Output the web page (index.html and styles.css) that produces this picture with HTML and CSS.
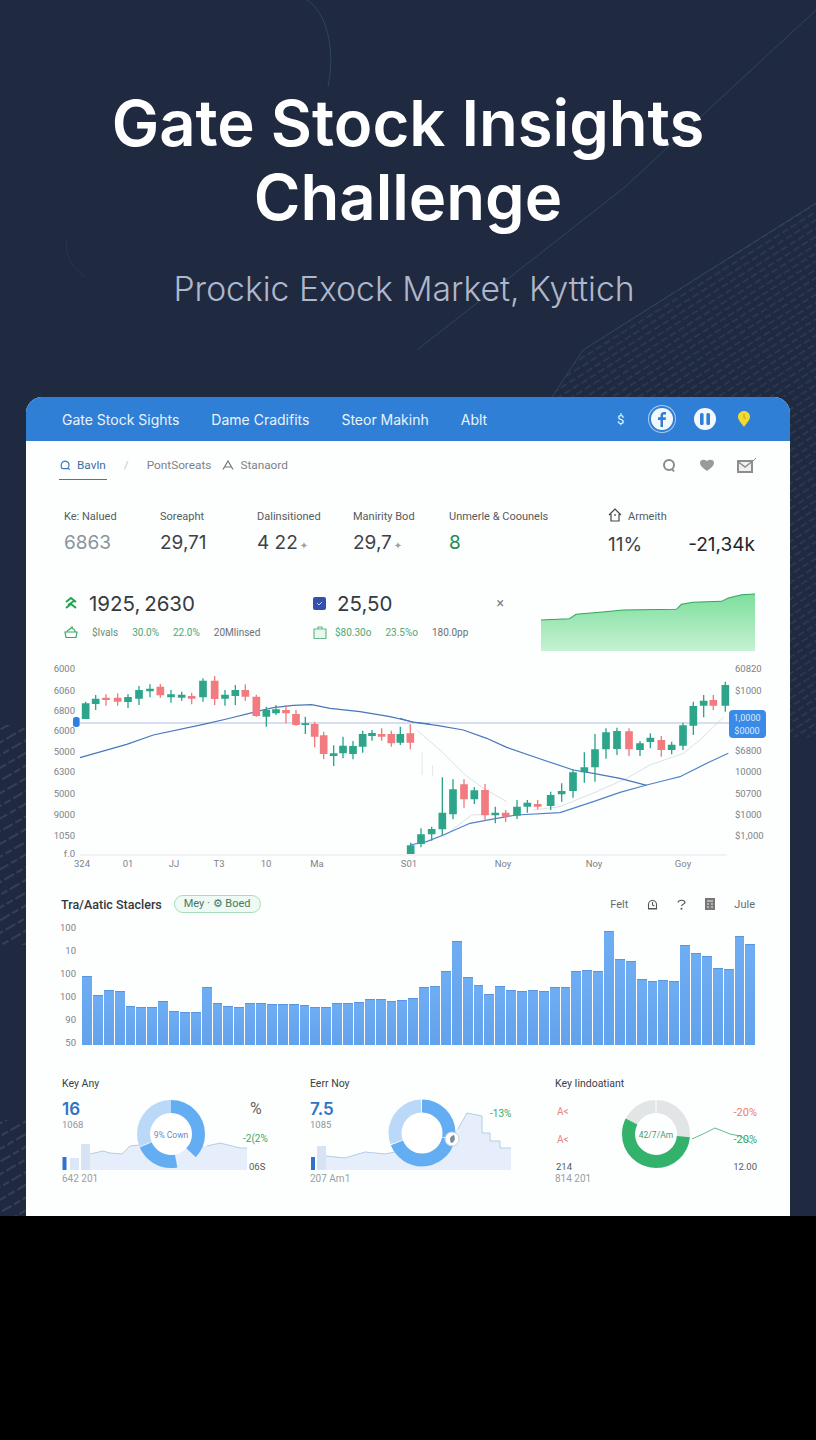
FILE: index.html
```html
<!DOCTYPE html>
<html lang="en">
<head>
    <meta charset="UTF-8">
    <meta name="viewport" content="width=device-width, initial-scale=1.0">
    <title>Gate Stock Insights Challenge</title>
    <link rel="stylesheet" href="styles.css">
</head>
<body>
    <div class="screen">
        <svg class="decor" width="816" height="1224" viewBox="0 0 816 1224">
            <defs>
                <pattern id="hatch-right" width="20" height="7" patternUnits="userSpaceOnUse" patternTransform="rotate(-32)">
                    <line x1="0" y1="3" x2="20" y2="3" class="hatch-line"/>
                </pattern>
                <pattern id="hatch-left" width="24" height="11" patternUnits="userSpaceOnUse" patternTransform="rotate(-30)">
                    <line x1="0" y1="5" x2="24" y2="5" class="hatch-line bright"/>
                </pattern>
            </defs>
            <rect x="0" y="1216" width="26" height="8" class="edge"/>
            <path class="arc" d="M307 0C326 12 336 48 328 87"/>
            <path class="arc faint" d="M67 240C64 255 72 268 86 277"/>
            <path class="arc" d="M816 10L625 187L417 350"/>
            <path class="arc" d="M816 203L583 350L552 397"/>
            <polygon points="816,203 583,350 552,397 816,397" class="hatch-zone-right"/>
            <rect x="790" y="397" width="26" height="340" class="hatch-zone-right"/>
            <rect x="0" y="725" width="26" height="220" class="hatch-zone-left"/>
            <rect x="0" y="1120" width="26" height="96" class="hatch-zone-left"/>
        </svg>

        <h1 class="title">Gate Stock Insights<br>Challenge</h1>
        <p class="subtitle">Prockic Exock Market, Kyttich</p>

        <div class="card">
            <div class="topbar">
                <a class="nav-link">Gate Stock Sights</a>
                <a class="nav-link">Dame Cradifits</a>
                <a class="nav-link">Steor Makinh</a>
                <a class="nav-link">Ablt</a>
                <div class="topbar-right">
                    <span class="dollar">$</span>
                    <span class="round-btn ringed">
                        <svg width="12" height="16" viewBox="0 0 12 16"><path d="M7 16V9h2.6l.4-2.7H7V4.800c0-.8.3-1.300 1.400-1.300H10V1.100C9.600 1 8.800 1 8 1 5.900 1 4.500 2.200 4.500 4.500v1.800H2V9h2.500v7z" fill="#2f7fd6"/></svg>
                    </span>
                    <span class="round-btn">
                        <svg width="12" height="14" viewBox="0 0 12 14"><rect x="1" y="1" width="3.600" height="12" rx="1.500" fill="#2f7fd6"/><rect x="7.400" y="1" width="3.600" height="12" rx="1.500" fill="#2f7fd6"/></svg>
                    </span>
                    <svg class="pin" width="14" height="18" viewBox="0 0 14 18"><path d="M7 17C4.500 13 1 10.500 1 6.800 1 3.500 3.700 1 7 1s6 2.500 6 5.800C13 10.500 9.500 13 7 17z" fill="#f3d930"/><path d="M7 4v3.500c0 1 1.500 1 2 .3" fill="none" stroke="#b79f1c"/></svg>
                </div>
            </div>

            <div class="tabs">
                <div class="tab active">
                    <svg width="11" height="11" viewBox="0 0 11 11"><path d="M2 8.500C.6 6.800 1 3 3 1.800c2-1.200 5-.6 5.800 1.700.5 1.700.2 3.700-1 5-1.500.2-4 .2-5.800 0zM8 8.500l2 1" class="tab-icon"/></svg>
                    Bavln
                </div>
                <span class="tab-sep">/</span>
                <div class="tab">PontSoreats</div>
                <div class="tab">
                    <svg width="12" height="10" viewBox="0 0 12 10"><path d="M1 9.500L6 1l5 8.500M3 7h6" class="tab-icon grey"/></svg>
                    Stanaord
                </div>
                <div class="tabs-right">
                    <svg width="15" height="15" viewBox="0 0 15 15"><circle cx="7" cy="7" r="5" fill="none" stroke="#8a8a8a" stroke-width="2"/><path d="M10 11l2 2.500" stroke="#8a8a8a" stroke-width="2"/></svg>
                    <svg width="14" height="12" viewBox="0 0 14 12"><path d="M7 12C4 9.500 0 7.500 0 3.800 0 1 3.500-.5 7 2c3.500-2.500 7-1 7 1.800C14 7.500 10 9.500 7 12z" fill="#9a9a9a"/></svg>
                    <svg width="20" height="16" viewBox="0 0 20 16"><rect x="1" y="4" width="14" height="11" fill="#f0f0f0" stroke="#8d8d8d" stroke-width="2"/><path d="M1.500 5L8 10l6.500-5" fill="none" stroke="#8d8d8d" stroke-width="1.500"/><path d="M16 4l3-3" stroke="#8d8d8d"/></svg>
                </div>
            </div>

            <div class="kpis">
                <div class="kpi"><div class="kpi-label">Ke: Nalued</div><div class="kpi-value muted">6863</div></div>
                <div class="kpi"><div class="kpi-label">Soreapht</div><div class="kpi-value">29,71</div></div>
                <div class="kpi"><div class="kpi-label">Dalinsitioned</div><div class="kpi-value">4 22<span class="kpi-mark">✦</span></div></div>
                <div class="kpi"><div class="kpi-label">Manirity Bod</div><div class="kpi-value">29,7<span class="kpi-mark">✦</span></div></div>
                <div class="kpi"><div class="kpi-label">Unmerle &amp; Coounels</div><div class="kpi-value green">8</div></div>
                <div class="kpi">
                    <div class="kpi-label">
                        <svg class="house" width="14" height="14" viewBox="0 0 14 14"><path d="M1 7l6-6 6 6M3 6v7h8V6M7 6v2" fill="none" stroke="#444" stroke-width="1.200"/></svg>
                        Armeith
                    </div>
                    <div class="kpi-split"><span class="kpi-value">11%</span><span class="kpi-value dark">-21,34k</span></div>
                </div>
            </div>

            <div class="quotes">
                <div class="quote">
                    <div class="quote-main">
                        <svg width="14" height="14" viewBox="0 0 14 14"><path d="M2 6l5-4 5 4M2 12l5-4 5 4M4 9l6-4" fill="none" stroke="#22a352" stroke-width="2"/></svg>
                        <span class="quote-value">1925, 2630</span>
                    </div>
                    <div class="quote-sub">
                        <svg width="14" height="13" viewBox="0 0 14 13"><path d="M1 6h12l-1 5.500H2zM3 6c0-2 2-2 3-3l2-2 1 2c1 0 2 1 2 3" fill="none" stroke="#3aa860" stroke-width="1.200"/></svg>
                        <span class="sub-name">$Ivals</span>
                        <span class="sub-green">30.0%</span>
                        <span class="sub-green">22.0%</span>
                        <span class="sub-grey">20Mlinsed</span>
                    </div>
                </div>
                <div class="quote second">
                    <div class="quote-main">
                        <span class="square"><svg width="7" height="5" viewBox="0 0 7 5"><path d="M1 2l2 2 3-3" fill="none" stroke="#c6d2f2" stroke-width="1"/></svg></span>
                        <span class="quote-value">25,50</span>
                        <span class="close">×</span>
                    </div>
                    <div class="quote-sub">
                        <svg width="14" height="13" viewBox="0 0 14 13"><path d="M1 3h12v9.500H1zM5 3V1h4v2" fill="#eaf7ef" stroke="#68b98a" stroke-width="1.200"/></svg>
                        <span class="sub-green">$80.30o</span>
                        <span class="sub-green">23.5%o</span>
                        <span class="sub-grey">180.0pp</span>
                    </div>
                </div>
                <svg class="spark" width="214" height="59" viewBox="375 600 640 177" preserveAspectRatio="none">
                    <defs>
                        <linearGradient id="spark-fill" x1="0" y1="0" x2="0" y2="1">
                            <stop offset="0" stop-color="#7ddf9d"/>
                            <stop offset="1" stop-color="#c6f1d3"/>
                        </linearGradient>
                    </defs>
                    <path d="M375 684L460 680L480 667L560 660L620 654L780 652L795 637L830 631L915 628L935 618L975 608L1015 606V777H375Z" fill="url(#spark-fill)"/>
                    <path d="M375 684L460 680L480 667L560 660L620 654L780 652L795 637L830 631L915 628L935 618L975 608L1015 606" fill="none" stroke="#35a55c" stroke-width="3"/>
                </svg>
            </div>

            <svg class="price-chart" width="764" height="220" viewBox="26 660 764 220">
                <line x1="80" y1="855" x2="727" y2="855" class="axis"/>
                <line x1="80" y1="723" x2="730" y2="723" class="level"/>

                <text class="tick" x="75" y="672" text-anchor="end">6000</text>
                <text class="tick" x="75" y="694" text-anchor="end">6060</text>
                <text class="tick" x="75" y="714" text-anchor="end">6800</text>
                <text class="tick" x="75" y="734" text-anchor="end">6000</text>
                <text class="tick" x="75" y="755" text-anchor="end">5000</text>
                <text class="tick" x="75" y="775" text-anchor="end">6300</text>
                <text class="tick" x="75" y="797" text-anchor="end">5000</text>
                <text class="tick" x="75" y="818" text-anchor="end">9000</text>
                <text class="tick" x="75" y="839" text-anchor="end">1050</text>
                <text class="tick" x="75" y="857" text-anchor="end">f.0</text>

                <text class="tick" x="735" y="672">60820</text>
                <text class="tick" x="735" y="694">$1000</text>
                <text class="tick" x="735" y="754">$6800</text>
                <text class="tick" x="735" y="775">10000</text>
                <text class="tick" x="735" y="797">50700</text>
                <text class="tick" x="735" y="818">$1000</text>
                <text class="tick" x="735" y="839">$1,000</text>

                <text class="tick" x="82" y="867" text-anchor="middle">324</text>
                <text class="tick" x="128" y="867" text-anchor="middle">01</text>
                <text class="tick" x="174" y="867" text-anchor="middle">JJ</text>
                <text class="tick" x="219" y="867" text-anchor="middle">T3</text>
                <text class="tick" x="266" y="867" text-anchor="middle">10</text>
                <text class="tick" x="317" y="867" text-anchor="middle">Ma</text>
                <text class="tick" x="409" y="867" text-anchor="middle">S01</text>
                <text class="tick" x="503" y="867" text-anchor="middle">Noy</text>
                <text class="tick" x="594" y="867" text-anchor="middle">Noy</text>
                <text class="tick" x="683" y="867" text-anchor="middle">Goy</text>

                <!-- left half, drawn at 3x so the numbers stay whole -->
                <g transform="translate(40 660) scale(.33333)">
                    <path class="ma dark" d="M120 293L260 253L340 225L490 193L560 177L640 157L700 143L760 136L815 134L870 145L960 155L1050 170L1120 186L1170 192"/>
                    <path class="wick up" d="M137 125V177M167 105V150M264 103V144M297 78V135M330 73V112M393 90V128M425 95V122M489 55V125M555 90V137M586 75V135M679 140V200M708 135V165M796 170V222M881 256V318M909 230V295M939 243V298M968 212V278M996 210V242M1081 200V255"/>
                    <path class="body up" d="M137 130V177M167 116V132M264 111V126M297 90V116M330 86V94M393 103V112M425 104V113M489 62V112M555 104V116M586 90V108M679 150V170M708 148V160M796 190V195M881 280V288M909 257V280M939 258V282M968 222V260M996 219V228M1081 222V248"/>
                    <path class="wick down" d="M198 103V137M233 100V137M361 72V113M455 98V133M524 48V135M616 73V122M649 104V170M738 135V190M768 150V197M824 185V262M851 215V297M1025 205V242M1054 212V260M1111 193V268"/>
                    <path class="body down" d="M198 113V120M233 113V125M361 80V106M455 108V116M524 62V117M616 90V110M649 110V168M738 150V160M768 162V195M824 192V230M851 226V282M1025 222V230M1054 222V250M1111 220V248"/>
                    <rect x="99" y="171" width="20" height="30" rx="8" class="marker"/>
                </g>

                <!-- right half -->
                <g transform="translate(400 660) scale(.33333)">
                    <path class="ghost" d="M66 275V345M98 315V350"/>
                    <path class="ma thin" d="M50 210L120 270L190 340L250 385L320 425M130 530L215 465L280 462M400 450L480 440L590 395L680 355L750 315L850 280L900 240L970 172"/>
                    <path class="ma dark" d="M0 175L35 186L115 197L190 210L260 235L320 262L430 300L520 330L580 340L660 355L740 376"/>
                    <path class="ma" d="M30 555L80 545L130 525L210 490L290 475L350 465L480 458L580 425L660 397L740 375L800 360L840 350L930 305L985 280"/>
                    <path class="wick up" d="M32 548V582M63 505V562M95 500V542M127 352V525M159 358V478M223 382V432M286 440V490M351 420V477M382 420V458M452 395V450M485 370V425M519 328V413M553 277V368M585 222V365M618 205V296M651 203V285M720 243V288M751 220V265M815 245V283M849 188V270M880 125V225M911 105V172M976 65V155"/>
                    <path class="body up" d="M32 556V582M63 523V552M95 507V523M127 458V508M159 388V463M223 391V418M286 458V466M351 440V467M382 428V440M452 405V438M485 393V403M519 337V393M553 322V337M585 268V322M618 217V268M651 213V267M720 250V270M751 233V246M815 254V270M849 196V257M880 138V197M911 122V137M976 75V137"/>
                    <path class="wick down" d="M192 358V443M255 372V482M317 450V486M413 420V448M687 205V288M784 228V290M940 105V150"/>
                    <path class="body down" d="M192 373V418M255 390V466M317 458V470M413 432V440M687 214V268M784 240V270M940 120V137"/>
                </g>

                <rect x="729" y="710" width="37" height="28" rx="4" class="price-tag"/>
                <text class="tag-text" x="747" y="721" text-anchor="middle">1,0000</text>
                <text class="tag-text" x="747" y="734" text-anchor="middle">$0000</text>
            </svg>

            <div class="volume-head">
                <div class="volume-title">
                    <span class="volume-name">Tra/Aatic Staclers</span>
                    <span class="pill">Mey · ⚙ Boed</span>
                </div>
                <div class="volume-tools">
                    <span>Felt</span>
                    <svg width="11" height="11" viewBox="0 0 11 11"><path d="M1 9.500h9M1.500 5.500a4 4 0 1 1 8 0V10h-8zM5.500 3v3l2 1" fill="none" stroke="#555" stroke-width="1.100"/></svg>
                    <svg width="9" height="11" viewBox="0 0 9 11"><path d="M1 3.500C1.500.5 7.500.5 8 3.500 8 5 5 5 4.500 7" fill="none" stroke="#555" stroke-width="1.200"/><circle cx="4.500" cy="9.800" r="1" fill="#555"/></svg>
                    <svg width="10" height="12" viewBox="0 0 10 12"><rect width="10" height="12" fill="#777"/><path d="M2 3h6M2 6h2M6 6h2M2 9h2M6 9h2" stroke="#eee"/></svg>
                    <span>Jule</span>
                </div>
            </div>

            <div class="volume">
                <div class="volume-axis">
                    <span>100</span><span>10</span><span>100</span><span>100</span><span>90</span><span>50</span>
                </div>
                <div class="bars">
                    <div class="bar" style="height:69px"></div><div class="bar" style="height:50px"></div><div class="bar" style="height:55px"></div><div class="bar" style="height:54px"></div><div class="bar" style="height:39px"></div><div class="bar" style="height:38px"></div><div class="bar" style="height:38px"></div><div class="bar" style="height:44px"></div><div class="bar" style="height:34px"></div><div class="bar" style="height:33px"></div><div class="bar" style="height:33px"></div><div class="bar" style="height:58px"></div><div class="bar" style="height:42px"></div><div class="bar" style="height:39px"></div><div class="bar" style="height:38px"></div><div class="bar" style="height:42px"></div><div class="bar" style="height:42px"></div><div class="bar" style="height:41px"></div><div class="bar" style="height:41px"></div><div class="bar" style="height:41px"></div><div class="bar" style="height:40px"></div><div class="bar" style="height:38px"></div><div class="bar" style="height:38px"></div><div class="bar" style="height:42px"></div><div class="bar" style="height:42px"></div><div class="bar" style="height:43px"></div><div class="bar" style="height:46px"></div><div class="bar" style="height:46px"></div><div class="bar" style="height:44px"></div><div class="bar" style="height:45px"></div><div class="bar" style="height:47px"></div>
                    <div class="bar" style="height:58px"></div><div class="bar" style="height:59px"></div><div class="bar" style="height:74px"></div><div class="bar" style="height:104px"></div><div class="bar" style="height:68px"></div><div class="bar" style="height:60px"></div><div class="bar" style="height:51px"></div><div class="bar" style="height:59px"></div><div class="bar" style="height:55px"></div><div class="bar" style="height:54px"></div><div class="bar" style="height:55px"></div><div class="bar" style="height:54px"></div><div class="bar" style="height:58px"></div><div class="bar" style="height:58px"></div><div class="bar" style="height:74px"></div><div class="bar" style="height:75px"></div><div class="bar" style="height:74px"></div><div class="bar" style="height:114px"></div><div class="bar" style="height:86px"></div><div class="bar" style="height:84px"></div><div class="bar" style="height:66px"></div><div class="bar" style="height:64px"></div><div class="bar" style="height:65px"></div><div class="bar" style="height:64px"></div><div class="bar" style="height:100px"></div><div class="bar" style="height:92px"></div><div class="bar" style="height:89px"></div><div class="bar" style="height:77px"></div><div class="bar" style="height:76px"></div><div class="bar" style="height:109px"></div><div class="bar" style="height:101px"></div>
                </div>
            </div>

            <div class="panels">
                <div class="panel">
                    <div class="panel-title">Key Any</div>
                    <svg width="210" height="80" viewBox="62 1091 210 80">
                        <rect x="62.500" y="1156" width="4" height="13" fill="#2f72d0"/>
                        <rect x="70" y="1157" width="9" height="12" fill="#dbe8f8"/>
                        <rect x="81" y="1143" width="9" height="26" fill="#d5e3f5"/>
                        <path class="mini-area" d="M90 1153L103 1150L110 1152L122 1153L130 1145L140 1144L207 1145L220 1142L240 1147L247 1147V1169H90Z"/>
                        <path class="mini-line" d="M90 1153L103 1150L110 1152L122 1153L130 1145L140 1144M207 1145L220 1142L240 1147L247 1147"/>
                        <circle cx="171" cy="1133" r="21" fill="#fff"/>
                        <circle cx="171" cy="1133" r="27.500" pathLength="100" class="ring pale" stroke-dasharray="31 69" stroke-dashoffset="-69"/>
                        <circle cx="171" cy="1133" r="27.500" pathLength="100" class="ring mid" stroke-dasharray="37 63"/>
                        <circle cx="171" cy="1133" r="27.500" pathLength="100" class="ring mid" stroke-dasharray="21.500 78.500" stroke-dashoffset="-47"/>
                        <text class="donut-text blue" x="171" y="1137" text-anchor="middle">9% Cown</text>
                        <text class="big-num" x="62" y="1114">16</text>
                        <text class="small-num" x="62" y="1127">1068</text>
                        <text class="percent" x="250" y="1113">%</text>
                        <text class="delta green" x="243" y="1141">-2(2%</text>
                        <text class="small-num dark" x="249" y="1169">06S</text>
                    </svg>
                    <div class="panel-foot">642 201</div>
                </div>
                <div class="panel">
                    <div class="panel-title">Eerr Noy</div>
                    <svg width="210" height="80" viewBox="310 1091 210 80">
                        <rect x="311" y="1156" width="4" height="13" fill="#2f72d0"/>
                        <rect x="317" y="1145" width="9" height="24" fill="#d5e3f5"/>
                        <path class="mini-area" d="M326 1155L345 1157L365 1151L385 1153L395 1151L458 1128L467 1112L482 1115V1132H490V1140H500V1147H511V1169H326Z"/>
                        <path class="mini-line" d="M326 1155L345 1157L365 1151L385 1153L395 1151M458 1128L467 1112L482 1115V1132H490V1140H500V1147H511"/>
                        <circle cx="422" cy="1132" r="33.500" fill="#fff"/>
                        <circle cx="422" cy="1132" r="27" pathLength="100" class="ring pale" stroke-dasharray="30 70" stroke-dashoffset="-69.500"/>
                        <circle cx="422" cy="1132" r="27" pathLength="100" class="ring mid" stroke-dasharray="28 72"/>
                        <circle cx="422" cy="1132" r="27" pathLength="100" class="ring mid" stroke-dasharray="40.500 59.500" stroke-dashoffset="-28.500"/>
                        <circle cx="452" cy="1138" r="7" fill="#fff" stroke="#c9d3df"/>
                        <path d="M454 1134c-4 1-5 4-3 8 3 0 5-4 3-8z" fill="#7e8b99"/>
                        <text class="big-num" x="310" y="1114">7.5</text>
                        <text class="small-num" x="310" y="1127">1085</text>
                        <text class="delta green" x="490" y="1116">-13%</text>
                    </svg>
                    <div class="panel-foot">207 Am1</div>
                </div>
                <div class="panel">
                    <div class="panel-title">Key Iindoatiant</div>
                    <svg width="210" height="80" viewBox="555 1091 210 80">
                        <circle cx="656" cy="1133" r="27.500" class="ring grey"/>
                        <line x1="656" y1="1098" x2="656" y2="1113" stroke="#fff"/>
                        <circle cx="656" cy="1133" r="27.500" pathLength="100" class="ring green" stroke-dasharray="56 44" stroke-dashoffset="-26.500"/>
                        <text class="donut-text deep" x="656" y="1137" text-anchor="middle">42/7/Am</text>
                        <path class="trend" d="M692 1138L703 1133L715 1127L730 1133L740 1135L753 1143"/>
                        <text class="delta pink" x="557" y="1114">A&lt;</text>
                        <text class="delta pink" x="557" y="1142">A&lt;</text>
                        <text class="delta-lg orange" x="757" y="1115" text-anchor="end">-20%</text>
                        <text class="delta-lg green" x="757" y="1142" text-anchor="end">-20%</text>
                        <text class="small-num dark" x="556" y="1169">214</text>
                        <text class="small-num dark" x="757" y="1169" text-anchor="end">12.00</text>
                    </svg>
                    <div class="panel-foot">814 201</div>
                </div>
            </div>
        </div>
    </div>
</body>
</html>
```

FILE: styles.css
```css
body {
    margin: 0;
    background: #000;
    font-family: Roboto, "Liberation Sans", sans-serif;
}
.screen {
    position: relative;
    height: 1216px;
    padding-top: 86px;
    box-sizing: border-box;
    background: #1f2a40;
}
.decor {
    position: absolute;
    top: 0;
    left: 0;
}
.edge {
    fill: #1f2a40;
}
.arc {
    fill: none;
    stroke: #2c4560;
    stroke-width: 1;
}
.arc.faint {
    stroke: #28374f;
}
.hatch-line {
    stroke: #46556f;
    stroke-width: .6;
    stroke-dasharray: 7 3;
}
.hatch-line.bright {
    stroke: #66738a;
}
.hatch-zone-right {
    fill: url(#hatch-right);
}
.hatch-zone-left {
    fill: url(#hatch-left);
}
.title {
    position: relative;
    margin: 0;
    text-align: center;
    font-family: Inter, sans-serif;
    font-size: 63.400px;
    line-height: 74px;
    font-weight: 600;
    color: #fff;
}
.subtitle {
    position: relative;
    margin: 33px 0 86px;
    padding-right: 8px;
    text-align: center;
    font-family: Inter, sans-serif;
    font-size: 33.700px;
    line-height: 44px;
    font-weight: 300;
    color: #b0b7c8;
}
.card {
    position: relative;
    width: 764px;
    height: 819px;
    margin-left: 26px;
    overflow: hidden;
    background: #fdfefe;
    border-radius: 16px 16px 0 0;
}

/* top bar */
.topbar {
    display: flex;
    align-items: center;
    gap: 32px;
    height: 44px;
    padding: 0 36px;
    background: #2f7fd6;
}
.nav-link {
    color: #eaf3fc;
    font-family: Inter, sans-serif;
    font-size: 14px;
}
.topbar-right {
    display: flex;
    align-items: center;
    margin-left: auto;
    margin-right: 3px;
}
.dollar {
    width: 8px;
    margin-right: 26px;
    color: #eaf3fc;
    font-size: 13px;
}
.round-btn {
    display: flex;
    align-items: center;
    justify-content: center;
    width: 22px;
    height: 22px;
    margin-right: 21px;
    border-radius: 50%;
    background: #f3f8fd;
}
.round-btn.ringed {
    box-shadow: 0 0 0 2px #2f7fd6, 0 0 0 3px #a9cdf0;
}

/* tabs */
.tabs {
    display: flex;
    align-items: flex-start;
    height: 29px;
    margin-top: 10px;
    padding: 0 33px;
    box-sizing: border-box;
    font-size: 11.800px;
    color: #7d8288;
}
.tab {
    display: flex;
    align-items: center;
    gap: 6px;
    height: 28px;
    margin-right: 11px;
}
.tab.active {
    padding: 0 1px;
    margin-right: 17px;
    color: #3d6fa6;
    border-bottom: 1.500px solid #3d78ba;
}
.tab-sep {
    margin-right: 18px;
    line-height: 28px;
    color: #c4c8cc;
}
.tab-icon {
    fill: none;
    stroke: #3d78ba;
    stroke-width: 1.200;
}
.tab-icon.grey {
    stroke: #777;
}
.tabs-right {
    display: flex;
    align-items: center;
    gap: 23px;
    height: 28px;
    margin-left: auto;
}

/* kpi row */
.kpis {
    display: grid;
    grid-template-columns: 96px 97px 96px 96px 159px 147px;
    margin-top: 28px;
    padding-left: 38px;
}
.kpi-label {
    display: flex;
    align-items: center;
    gap: 6px;
    height: 16px;
    font-size: 11px;
    color: #555b60;
}
.house {
    margin-top: -2px;
}
.kpi-value {
    margin-top: 5px;
    font-family: Inter, sans-serif;
    font-size: 19px;
    line-height: 28px;
    color: #3d4247;
}
.kpi-value.muted {
    color: #8b949c;
}
.kpi-value.green {
    color: #1f8a48;
}
.kpi-value.dark {
    color: #22262a;
}
.kpi-mark {
    margin-left: 2px;
    font-family: "DejaVu Sans", sans-serif;
    font-size: 10px;
    line-height: 1;
    color: #9aa2a8;
}
.kpi-split {
    display: flex;
    justify-content: space-between;
    margin-top: 7px;
}
.kpi-split .kpi-value {
    margin-top: 0;
}

/* quote row */
.quotes {
    display: flex;
    margin-top: 33px;
    padding-left: 38px;
    height: 59px;
}
.quote {
    width: 249px;
}
.quote.second {
    width: 228px;
}
.quote-main {
    display: flex;
    align-items: center;
    gap: 11px;
    height: 22px;
}
.quote-value {
    font-family: Inter, sans-serif;
    font-size: 20.500px;
    word-spacing: -2px;
    color: #363b40;
}
.square {
    display: flex;
    align-items: center;
    justify-content: center;
    width: 13px;
    height: 13px;
    border-radius: 2px;
    background: #3350ac;
}
.close {
    margin-left: 93px;
    font-size: 14px;
    color: #7b8086;
}
.quote-sub {
    display: flex;
    align-items: center;
    gap: 14px;
    height: 16px;
    margin-top: 10px;
    font-size: 10px;
    color: #777;
}
.second .quote-sub {
    gap: 8px;
}
.second .sub-green + .sub-green,
.second .sub-grey {
    margin-left: 6px;
}
.sub-name {
    color: #5f8f78;
}
.sub-green {
    color: #4fa874;
}
.sub-grey {
    color: #6a6f74;
}

/* price chart */
.price-chart {
    display: block;
    margin-top: 9px;
}
.axis {
    stroke: #e3e7ee;
}
.level {
    stroke: #aebfe4;
    stroke-width: 1.200;
}
.tick {
    font-size: 9.500px;
    fill: #7e8388;
}
.ma {
    fill: none;
    stroke: #4f82c9;
    stroke-width: 3.500;
}
.ma.dark {
    stroke: #4a76bb;
}
.ma.thin {
    stroke: #ccd2d6;
    stroke-width: 2;
}
.ghost {
    fill: none;
    stroke: #e6e6e6;
    stroke-width: 3;
}
.wick {
    fill: none;
    stroke-width: 4;
}
.body {
    fill: none;
    stroke-width: 23;
}
.up {
    stroke: #2da58a;
}
.down {
    stroke: #f27b80;
}
.marker {
    fill: #2f7fe0;
}
.price-tag {
    fill: #3a8ae8;
}
.tag-text {
    font-size: 9px;
    fill: #dcecfd;
}

/* volume */
.volume-head {
    display: flex;
    align-items: center;
    justify-content: space-between;
    height: 18px;
    margin-top: 15px;
    padding: 0 35px;
}
.volume-title {
    display: flex;
    align-items: center;
    gap: 12px;
}
.volume-name {
    font-size: 12.500px;
    font-weight: 500;
    color: #33383c;
}
.pill {
    padding: 0 9px;
    height: 18px;
    box-sizing: border-box;
    line-height: 16px;
    font-size: 11px;
    color: #47795f;
    background: #f0faf4;
    border: 1px solid #a6dcbb;
    border-radius: 9px;
}
.volume-tools {
    display: flex;
    align-items: center;
    gap: 19px;
    font-size: 11px;
    color: #666b70;
}
.volume {
    display: flex;
    align-items: flex-start;
    gap: 6px;
    margin-top: 10px;
    padding: 0 35px 0 34px;
}
.volume-axis {
    display: flex;
    flex-direction: column;
    justify-content: space-between;
    align-items: flex-end;
    width: 16px;
    height: 125px;
    font-size: 9.500px;
    line-height: 10px;
    color: #7e8388;
}
.bars {
    display: flex;
    align-items: flex-end;
    flex: 1;
    gap: 1px;
    height: 122px;
}
.bar {
    flex: 1;
    box-sizing: border-box;
    background: linear-gradient(#6fadf3, #62a2ec);
    border-top: 1px solid #5a96df;
}

/* bottom panels */
.panels {
    display: grid;
    grid-template-columns: 248px 245px 235px;
    margin-top: 28px;
    padding-left: 36px;
}
.panel svg {
    display: block;
}
.panel-title {
    height: 16px;
    line-height: 16px;
    font-size: 10.500px;
    color: #3a3f44;
}
.panel-foot {
    height: 14px;
    line-height: 14px;
    font-size: 10px;
    color: #999ea3;
}
.big-num {
    font-family: Inter, sans-serif;
    font-size: 17px;
    font-weight: 600;
    fill: #2e74c6;
}
.small-num {
    font-size: 9.500px;
    fill: #8f9499;
}
.small-num.dark {
    fill: #555a5f;
}
.percent {
    font-size: 16px;
    fill: #666;
}
.delta {
    font-size: 10px;
}
.delta-lg {
    font-size: 11px;
}
.green {
    fill: #3aa868;
}
.pink {
    fill: #e8838f;
}
.orange {
    fill: #ea7f68;
}
.mini-area {
    fill: #e5eefa;
}
.mini-line {
    fill: none;
    stroke: #b4cde6;
}
.ring {
    fill: none;
    stroke-width: 13;
    transform: rotate(-90deg);
    transform-box: fill-box;
    transform-origin: center;
}
.ring.pale {
    stroke: #bad8f8;
}
.ring.mid {
    stroke: #63aef2;
}
.ring.grey {
    stroke: #e2e5e6;
}
.ring.green {
    stroke: #33b26b;
    fill: none;
}
.donut-text {
    font-size: 8.500px;
}
.donut-text.blue {
    fill: #5a90c8;
}
.donut-text.deep {
    fill: #4c9a6e;
}
.trend {
    fill: none;
    stroke: #45a471;
    stroke-width: .8;
}
```
